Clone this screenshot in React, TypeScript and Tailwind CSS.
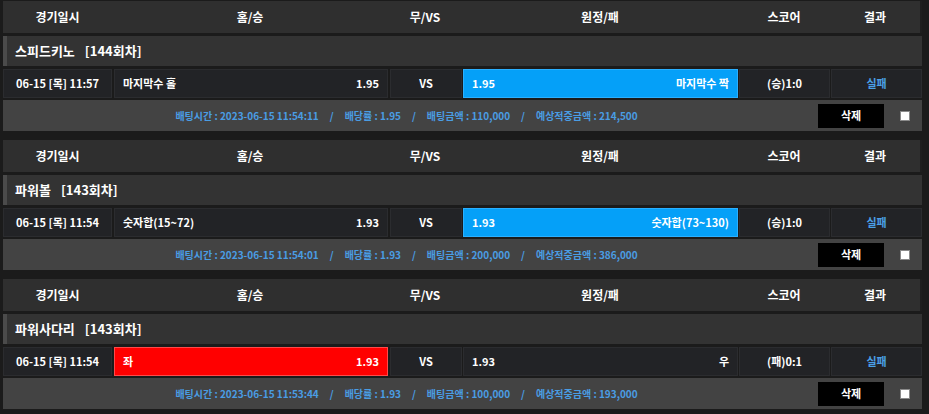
import React from "react";

type Bet = {
  game: string;
  round: string;
  date: string;
  home: string;
  homeOdds: string;
  away: string;
  awayOdds: string;
  pick: "home" | "away";
  score: string;
  result: string;
  betTime: string;
  odds: string;
  amount: string;
  expected: string;
};

const bets: Bet[] = [
  {
    game: "스피드키노",
    round: "[144회차]",
    date: "06-15 [목] 11:57",
    home: "마지막수 홀",
    homeOdds: "1.95",
    away: "마지막수 짝",
    awayOdds: "1.95",
    pick: "away",
    score: "(승)1:0",
    result: "실패",
    betTime: "2023-06-15 11:54:11",
    odds: "1.95",
    amount: "110,000",
    expected: "214,500",
  },
  {
    game: "파워볼",
    round: "[143회차]",
    date: "06-15 [목] 11:54",
    home: "숫자합(15~72)",
    homeOdds: "1.93",
    away: "숫자합(73~130)",
    awayOdds: "1.93",
    pick: "away",
    score: "(승)1:0",
    result: "실패",
    betTime: "2023-06-15 11:54:01",
    odds: "1.93",
    amount: "200,000",
    expected: "386,000",
  },
  {
    game: "파워사다리",
    round: "[143회차]",
    date: "06-15 [목] 11:54",
    home: "좌",
    homeOdds: "1.93",
    away: "우",
    awayOdds: "1.93",
    pick: "home",
    score: "(패)0:1",
    result: "실패",
    betTime: "2023-06-15 11:53:44",
    odds: "1.93",
    amount: "100,000",
    expected: "193,000",
  },
];

const cell =
  "h-full flex items-center border border-[#2b2c2f] bg-[#222326]";

const Sep = () => <span className="mx-[11px]">/</span>;

const BetCard = ({ bet }: { bet: Bet }) => {
  const homeCls =
    bet.pick === "home"
      ? "bg-[#ff0000] border-[#ff4a4a]"
      : "bg-[#222326] border-[#2b2c2f]";
  const awayCls =
    bet.pick === "away"
      ? "bg-[#05a0f8] border-[#2bb0ff]"
      : "bg-[#222326] border-[#2b2c2f]";

  return (
    <div className="flex flex-col">
      {/* header */}
      <div className="flex h-[32px] bg-[#2f2f2f] border-r-2 border-[#1e1e1e] text-[12px] font-bold text-white">
        <div className="w-[109px] flex items-center justify-center">경기일시</div>
        <div className="w-[276px] flex items-center justify-center">홈/승</div>
        <div className="w-[74px] flex items-center justify-center">무/VS</div>
        <div className="w-[276px] flex items-center justify-center">원정/패</div>
        <div className="w-[92px] flex items-center justify-center">스코어</div>
        <div className="flex-1 flex items-center justify-center">결과</div>
      </div>

      {/* game title */}
      <div className="mt-[3px] flex h-[30px] items-center bg-[#333333] border-l-4 border-[#4b4b4b] pl-[8px] text-[13px] font-bold text-white">
        <span>{bet.game}</span>
        <span className="ml-[10px]">{bet.round}</span>
      </div>

      {/* bet row */}
      <div className="mt-[3px] flex h-[29px] gap-[2px] text-[11px] font-bold text-white">
        <div className={`${cell} w-[109px] justify-center`}>{bet.date}</div>
        <div
          className={`h-full w-[274px] flex items-center justify-between border px-[8px] ${homeCls}`}
        >
          <span>{bet.home}</span>
          <span>{bet.homeOdds}</span>
        </div>
        <div className={`${cell} w-[72px] justify-center`}>VS</div>
        <div
          className={`h-full w-[275px] -ml-px flex items-center justify-between border px-[8px] ${awayCls}`}
        >
          <span>{bet.awayOdds}</span>
          <span>{bet.away}</span>
        </div>
        <div className={`${cell} w-[91px] -ml-px justify-center`}>{bet.score}</div>
        <div className={`${cell} flex-1 -ml-px justify-center`}>
          <span className="text-[#4a9fe6]">{bet.result}</span>
        </div>
      </div>

      {/* bet info */}
      <div className="mt-[2px] flex h-[31px] items-center bg-[#434343] text-[10px] font-bold">
        <div className="flex-1 flex justify-center text-[#4a9de4] whitespace-pre">
          <span>배팅시간 : {bet.betTime}</span>
          <Sep />
          <span>배당률 : {bet.odds}</span>
          <Sep />
          <span>배팅금액 : {bet.amount}</span>
          <Sep />
          <span>예상적중금액 : {bet.expected}</span>
        </div>
        <button className="ml-[8px] h-[24px] w-[66px] bg-black text-[11px] font-bold text-white">
          삭제
        </button>
        <div className="w-[38px] flex items-center justify-center pl-[4px]">
          <span className="block h-[10px] w-[10px] bg-white border border-[#8a8a8a]" />
        </div>
      </div>
    </div>
  );
};

const App = () => {
  return (
    <div
      className="min-h-[414px] w-[929px] bg-[#1b1b1b] pl-[3px] pr-[7px] pt-[1px] flex flex-col gap-[9px]"
      style={{ fontFamily: '"Noto Sans CJK KR", "Noto Sans", sans-serif' }}
    >
      {bets.map((bet, i) => (
        <BetCard key={i} bet={bet} />
      ))}
    </div>
  );
};

export default App;
